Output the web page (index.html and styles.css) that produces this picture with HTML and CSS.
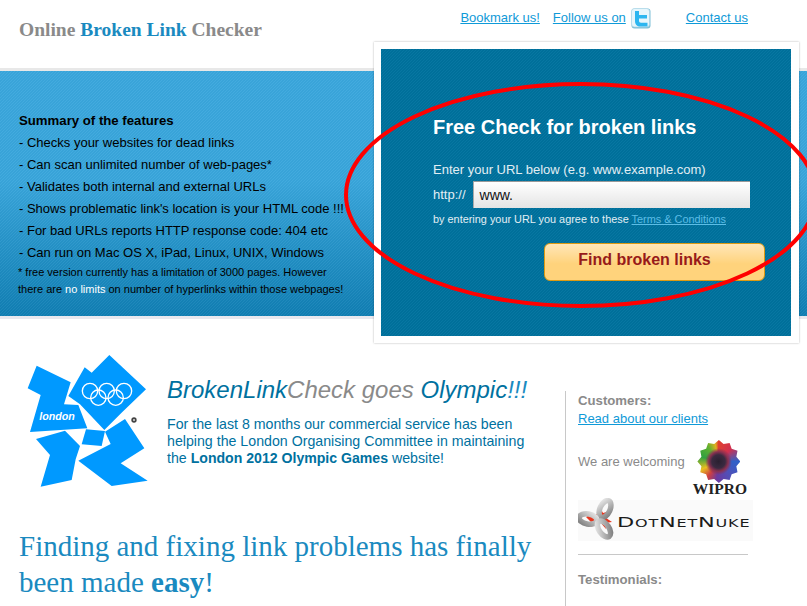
FILE: index.html
```html
<!DOCTYPE html>
<html lang="en">
<head>
    <meta charset="UTF-8">
    <title>Online Broken Link Checker</title>
    <link rel="stylesheet" href="styles.css">
</head>
<body>
    <header class="top">
        <div class="brand">Online <span class="brand-blue">Broken Link</span> Checker</div>
        <nav class="top-links">
            <a href="#">Bookmark us!</a>
            <a href="#" class="follow">Follow us on</a>
            <svg class="twitter" viewBox="0 0 20 21" width="20" height="21">
                <rect x="0.5" y="0.5" width="19" height="20" rx="3" fill="#7fc0d8"/>
                <rect x="0.5" y="0.5" width="18" height="18.5" rx="3" fill="#e6f6fc" stroke="#a8d4e6" stroke-width="0.6"/>
                <path d="M4 3h4v4h8v3.5H8v2.2c0 1.3.7 2 2 2h6.5v3.8H9.5C6 18.5 4 16.5 4 13z" fill="#2cb6f0"/>
            </svg>
            <a href="#" class="contact">Contact us</a>
        </nav>
    </header>

    <section class="band">
        <div class="summary">
            <h3>Summary of the features</h3>
            <p>- Checks your websites for dead links</p>
            <p>- Can scan unlimited number of web-pages*</p>
            <p>- Validates both internal and external URLs</p>
            <p>- Shows problematic link's location is your HTML code !!!</p>
            <p>- For bad URLs reports HTTP response code: 404 etc</p>
            <p>- Can run on Mac OS X, iPad, Linux, UNIX, Windows</p>
            <small>* free version currently has a limitation of 3000 pages. However<br>there are <em>no limits</em> on number of hyperlinks within those webpages!</small>
        </div>
        <div class="panel">
            <form class="panel-inner">
                <h2>Free Check for broken links</h2>
                <label class="url-label">Enter your URL below (e.g. www.example.com)</label>
                <div class="url-row">
                    <span>http://</span>
                    <div class="url-input">www.</div>
                </div>
                <p class="terms">by entering your URL you agree to these <a href="#">Terms &amp; Conditions</a></p>
                <div class="find-row"><div class="find-btn">Find broken links</div></div>
            </form>
        </div>
        <svg class="circle" width="807" height="260" viewBox="0 0 807 260">
            <ellipse cx="581" cy="124" rx="235" ry="111" fill="none" stroke="#ff0000" stroke-width="4"/>
        </svg>
    </section>

    <main class="content">
        <div class="news">
            <div class="olympic">
                <svg class="london" viewBox="0 0 510 480" width="170" height="160">
                    <g fill="#0099ff">
                        <polygon points="110,77 212,127 192,193 235,195 262,265 90,276 122,165 83,145"/>
                        <polygon points="254,82 275,98 328,45 438,148 367,216 313,270 240,193 205,168"/>
                        <polygon points="108,297 195,272 240,318 227,358 215,420 122,440 150,345"/>
                        <polygon points="258,268 315,273 305,318 245,313"/>
                        <polygon points="375,237 433,325 362,370 443,422 335,438 235,362 332,312 315,275"/>
                    </g>
                    <g fill="none" stroke="#fff" stroke-width="4">
                        <circle cx="270" cy="153" r="23"/>
                        <circle cx="320" cy="153" r="23"/>
                        <circle cx="372" cy="153" r="23"/>
                        <circle cx="295" cy="173" r="23"/>
                        <circle cx="347" cy="173" r="23"/>
                    </g>
                    <text x="118" y="241" class="london-word">london</text>
                    <circle cx="402" cy="240" r="8" fill="#444"/>
                    <circle cx="402" cy="240" r="3" fill="#ddd"/>
                </svg>
                <div class="olympic-text">
                    <h2><span class="dark">BrokenLink</span><span class="grey">Check goes</span> <span class="dark">Olympic</span><span class="blue">!!!</span></h2>
                    <p>For the last 8 months our commercial service has been helping the London Organising Committee in maintaining the <b>London 2012 Olympic Games</b> website!</p>
                </div>
            </div>
            <h1>Finding and fixing link problems has finally been made <b>easy</b>!</h1>
        </div>
        <aside class="side">
            <h4>Customers:</h4>
            <a href="#">Read about our clients</a>
            <div class="welcome">
                <span>We are welcoming</span>
                <div class="wipro">
                    <div class="wipro-flower"></div>
                    <div class="wipro-name">WIPRO</div>
                </div>
            </div>
            <div class="dnn">
                <svg viewBox="0 0 40 42" width="40" height="42">
                    <defs>
                        <linearGradient id="silver" x1="0" y1="0" x2="1" y2="1">
                            <stop offset="0" stop-color="#e4e4e4"/>
                            <stop offset="1" stop-color="#808080"/>
                        </linearGradient>
                    </defs>
                    <path d="M13 16 8 19 15 26 13 29 22 24 28 31 27 25 34 24 28 20 32 13 25 15 22 9 20 16z" fill="#e8341c"/>
                    <g fill="none" stroke="url(#silver)" stroke-width="5.5">
                        <ellipse cx="27" cy="11" rx="5" ry="9" transform="rotate(25 27 11)"/>
                        <ellipse cx="10" cy="21" rx="5" ry="9" transform="rotate(100 10 21)"/>
                        <ellipse cx="26" cy="31" rx="5" ry="9" transform="rotate(-35 26 31)"/>
                    </g>
                </svg>
                <span>DotNetNuke</span>
            </div>
            <hr>
            <h4 class="testimonials">Testimonials:</h4>
        </aside>
    </main>
</body>
</html>
```
FILE: styles.css
```css
html, body {
    margin: 0;
    padding: 0;
    height: 606px;
    overflow: hidden;
    background-color: #ffffff;
    font-family: "Liberation Sans", Arial, sans-serif;
    font-size: 13px;
}

a {
    color: #0f9ad8;
}

.top {
    height: 68px;
    display: flex;
    justify-content: space-between;
    border-bottom: 3px solid #e8e8e8;
    padding: 0 59px 0 19px;
}

.brand {
    margin-top: 19px;
    font-family: "Liberation Serif", serif;
    font-weight: bold;
    font-size: 19.5px;
    color: #8a8a8a;
}

.brand-blue {
    color: #1a8ac0;
}

.top-links {
    display: flex;
    align-items: flex-start;
    padding-top: 10px;
}

.follow {
    margin-left: 13px;
}

.twitter {
    margin-left: 5px;
    margin-top: -2px;
}

.contact {
    margin-left: 35px;
}

.band {
    position: relative;
    height: 245px;
    display: flex;
    justify-content: space-between;
    padding: 0 8px 0 19px;
    border-bottom: 3px solid #e8e8ee;
    background:
        repeating-linear-gradient(135deg, rgba(255, 255, 255, 0.05) 0, rgba(255, 255, 255, 0.05) 0.7071px, rgba(0, 0, 0, 0.02) 0.7071px, rgba(0, 0, 0, 0.02) 2.1213px),
        linear-gradient(#3aa7dd 0%, #39a6dc 45%, #107fb4 100%);
}

.summary {
    padding-top: 39px;
    width: 340px;
    color: #000;
}

.summary h3 {
    margin: 0;
    font-size: 13.2px;
    line-height: 22px;
}

.summary p {
    margin: 0;
    line-height: 22px;
    white-space: nowrap;
}

.summary small {
    display: block;
    margin-left: -1px;
    font-size: 11px;
    line-height: 17px;
    white-space: nowrap;
}

.summary em {
    font-style: normal;
    color: #ffffff;
}

.panel {
    margin-top: -29px;
    width: 410px;
    height: 287px;
    padding: 7px 8px 7px 7px;
    background-color: #ffffff;
    box-shadow: 0 0 2px rgba(0, 0, 0, 0.3);
    z-index: 1;
}

.panel-inner {
    height: 287px;
    box-sizing: border-box;
    padding: 66px 26px 0 52px;
    color: #e2eef4;
    background:
        repeating-linear-gradient(135deg, rgba(255, 255, 255, 0.03) 0, rgba(255, 255, 255, 0.03) 0.7071px, rgba(0, 0, 0, 0.03) 0.7071px, rgba(0, 0, 0, 0.03) 2.1213px),
        #00739f;
}

.panel-inner h2 {
    margin: 0 0 22px;
    font-size: 20px;
    line-height: 24px;
    color: #ffffff;
}

.url-label {
    display: block;
    line-height: 18px;
    margin-bottom: 2px;
}

.url-row {
    display: flex;
    align-items: center;
    gap: 7px;
}

.url-input {
    box-sizing: border-box;
    width: 277px;
    height: 27px;
    padding-left: 6px;
    line-height: 26px;
    font-size: 14px;
    color: #111;
    border-top: 1px solid #999;
    border-left: 1px solid #aaa;
    background: linear-gradient(#ffffff, #e4e4e4);
}

.terms {
    margin: 4px 0 0;
    font-size: 10.9px;
    line-height: 14px;
    white-space: nowrap;
}

.terms a {
    color: #5cbde6;
}

.find-row {
    display: flex;
    justify-content: flex-end;
    margin-top: 17px;
}

.find-btn {
    box-sizing: border-box;
    width: 221px;
    height: 38px;
    padding-right: 20px;
    line-height: 32px;
    text-align: center;
    font-size: 16px;
    font-weight: bold;
    color: #971a1a;
    border: 1px solid #dd9a12;
    border-radius: 6px;
    background: linear-gradient(#ffe6b8, #ffd37c 55%);
}

.circle {
    position: absolute;
    left: 0;
    top: 0;
    z-index: 2;
}

.content {
    display: flex;
    padding-left: 19px;
}

.news {
    width: 546px;
}

.olympic {
    display: flex;
    margin-top: 21px;
    margin-left: -19px;
}

.london {
    flex: none;
}

.london-word {
    font-size: 32px;
    font-style: italic;
    font-weight: bold;
    fill: #fff;
}

.olympic-text {
    margin-left: -3px;
    width: 375px;
}

.olympic-text h2 {
    margin: 35px 0 0;
    font-size: 24px;
    line-height: 30px;
    font-weight: normal;
    font-style: italic;
    white-space: nowrap;
}

.dark {
    color: #00719f;
}

.grey {
    color: #8a8a8a;
}

.blue {
    color: #1a8ac0;
}

.olympic-text p {
    margin: 11px 0 0;
    color: #00719f;
    font-size: 14.2px;
    line-height: 17px;
}

.olympic-text b {
    font-size: 14.1px;
}

.news h1 {
    margin: 28px 0 0;
    font-family: "Liberation Serif", serif;
    font-size: 29px;
    line-height: 36px;
    font-weight: normal;
    color: #1a8ac0;
}

.side {
    margin-top: 72px;
    border-left: 1px solid #c8c8c8;
    padding: 0 0 0 12px;
    width: 175px;
    height: 215px;
    color: #8a8a8a;
}

.side h4 {
    margin: 0;
    padding-top: 1px;
    font-size: 13.2px;
    line-height: 18px;
}

.side a {
    display: block;
    line-height: 18px;
}

.welcome {
    display: flex;
    justify-content: space-between;
    width: 169px;
    margin-top: 12px;
}

.welcome span {
    margin-top: 14px;
}

.wipro {
    text-align: center;
}

.wipro-flower {
    width: 43px;
    height: 43px;
    margin: 0 auto;
    transform: translateX(-1px);
    background:
        radial-gradient(circle, #2a2030 0, #3a2a40 22%, #8a3050 32%, transparent 44%),
        conic-gradient(#e04030 0deg, #d03050 45deg, #3060c8 90deg, #5050b8 140deg, #6a3aa0 185deg, #d04040 215deg, #e8c020 245deg, #30a040 285deg, #60b030 325deg, #e0b020 350deg, #e04030 360deg);
    clip-path: polygon(50% 0, 60.9% 9.4%, 75% 6.7%, 79.7% 20.3%, 93.3% 25%, 90.6% 39.1%, 100% 50%, 90.6% 60.9%, 93.3% 75%, 79.7% 79.7%, 75% 93.3%, 60.9% 90.6%, 50% 100%, 39.1% 90.6%, 25% 93.3%, 20.3% 79.7%, 6.7% 75%, 9.4% 60.9%, 0 50%, 9.4% 39.1%, 6.7% 25%, 20.3% 20.3%, 25% 6.7%, 39.1% 9.4%);
}

.wipro-name {
    font-family: "Liberation Serif", serif;
    font-weight: bold;
    font-size: 15.5px;
    line-height: 12px;
    color: #222;
}

.dnn {
    display: flex;
    align-items: center;
    width: 175px;
    height: 41px;
    margin-top: 5px;
    background-color: #fafafa;
}

.dnn svg {
    flex: none;
    margin-top: -3px;
}

.dnn span {
    margin-left: -1px;
    margin-top: 3px;
    font-family: "DejaVu Sans", sans-serif;
    font-size: 14px;
    font-variant: small-caps;
    letter-spacing: 0.5px;
    color: #1a1a1a;
    transform: scaleX(1.6);
    transform-origin: left center;
}

.side hr {
    width: 170px;
    margin: 13px 0 0;
    border: 0;
    border-top: 1px solid #c8c8c8;
}

.testimonials {
    margin-top: 15px !important;
}
```
